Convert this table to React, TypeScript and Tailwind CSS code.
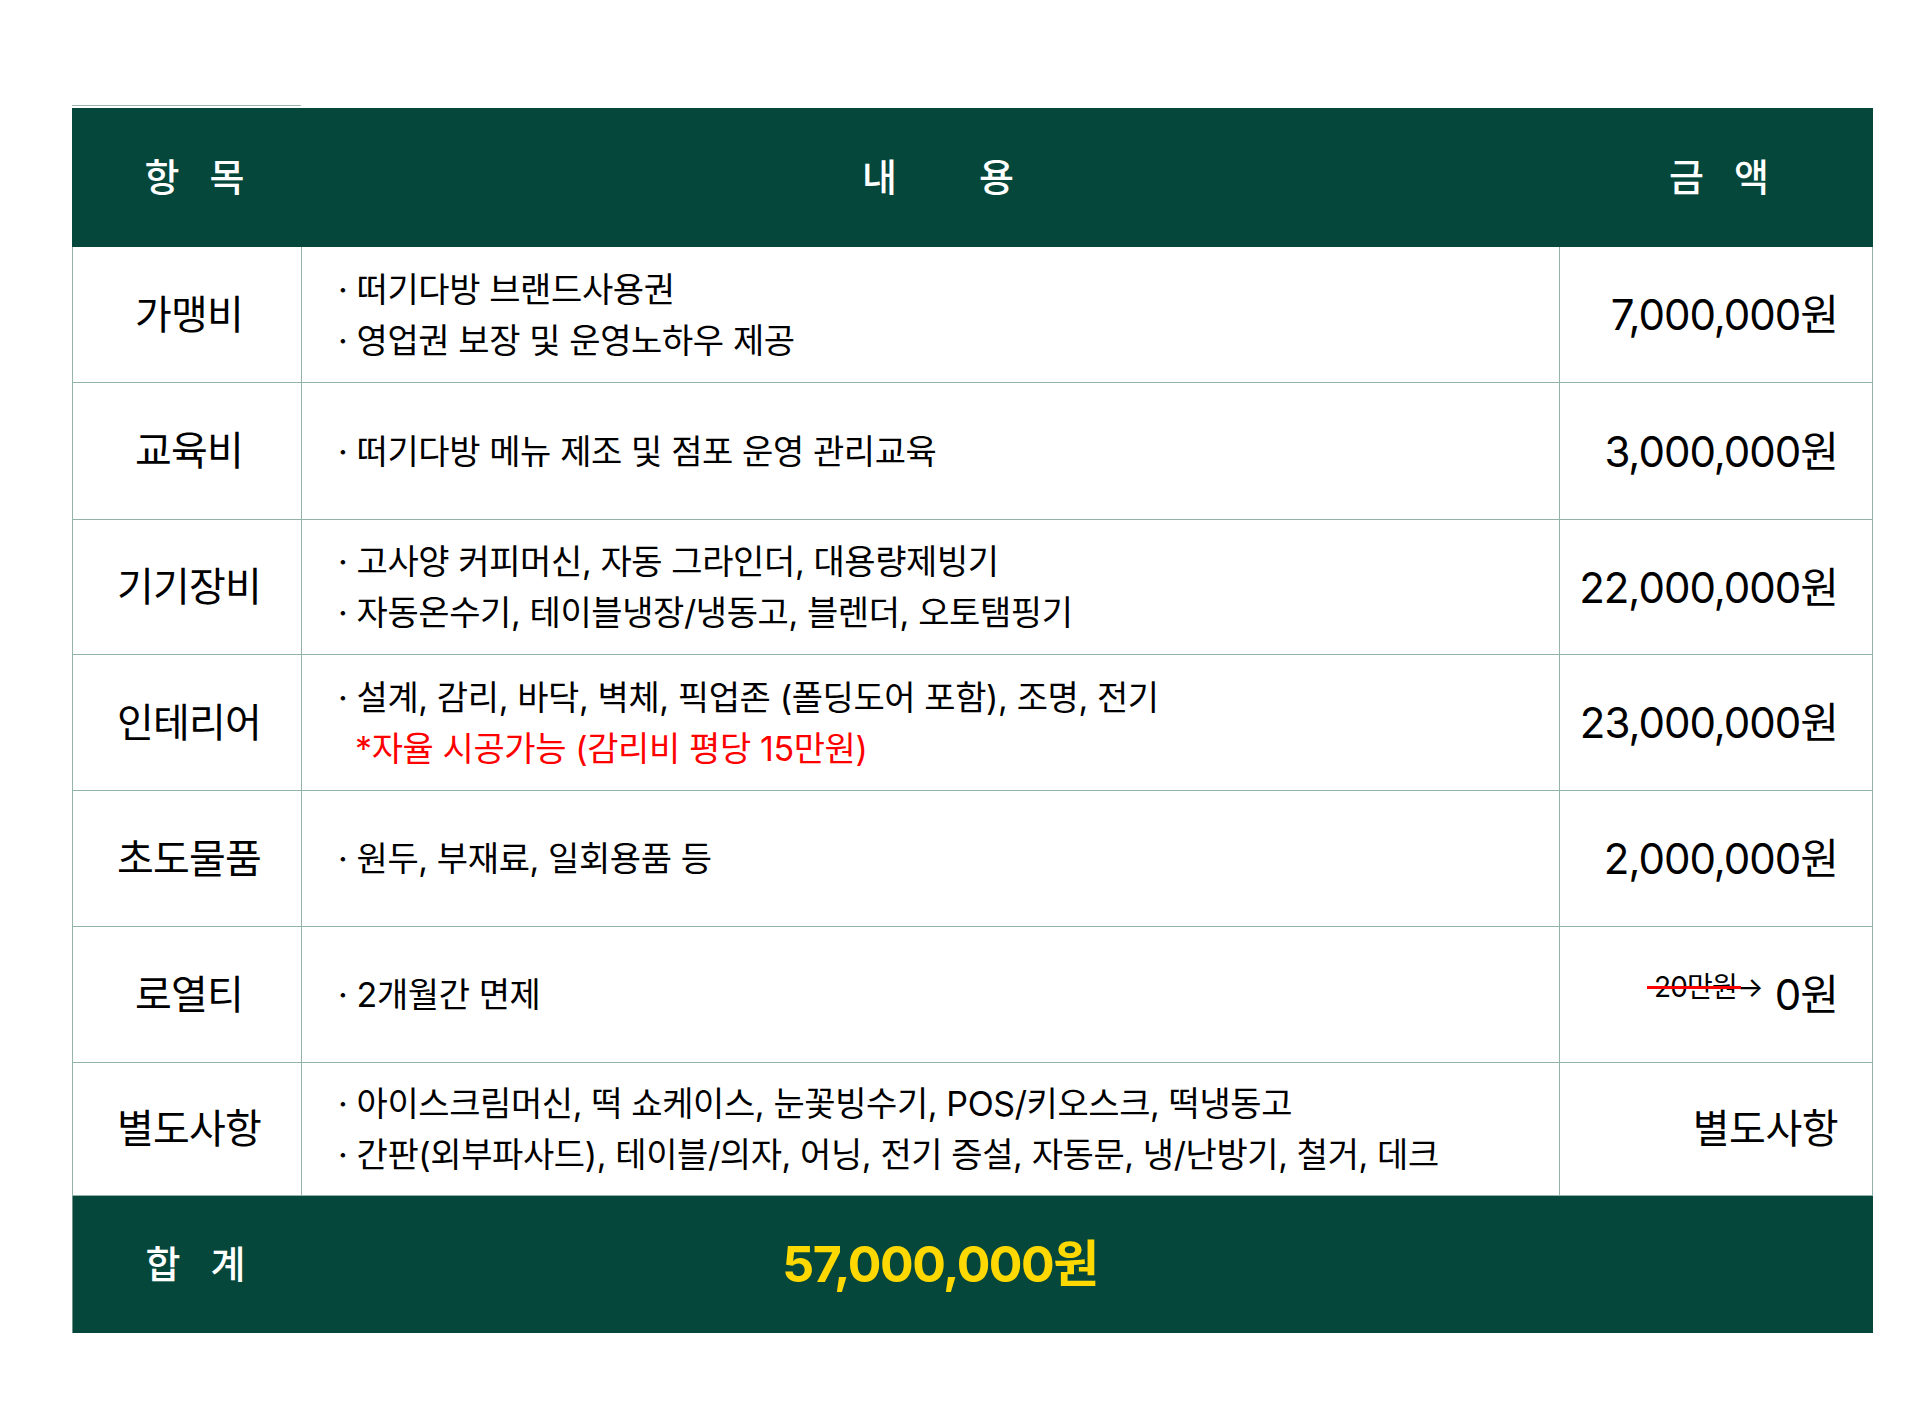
const font = { fontFamily: '"Inter", "Noto Sans CJK KR", sans-serif' };

type Row = {
  name: string;
  lines: { text: string; red?: boolean }[];
  amount: React.ReactNode;
  h: string;
};

const rows: Row[] = [
  {
    name: "가맹비",
    lines: [{ text: "· 떠기다방 브랜드사용권" }, { text: "· 영업권 보장 및 운영노하우 제공" }],
    amount: "7,000,000원",
    h: "h-[136px]",
  },
  {
    name: "교육비",
    lines: [{ text: "· 떠기다방 메뉴 제조 및 점포 운영 관리교육" }],
    amount: "3,000,000원",
    h: "h-[137px]",
  },
  {
    name: "기기장비",
    lines: [
      { text: "· 고사양 커피머신, 자동 그라인더, 대용량제빙기" },
      { text: "· 자동온수기, 테이블냉장/냉동고, 블렌더, 오토탬핑기" },
    ],
    amount: "22,000,000원",
    h: "h-[135px]",
  },
  {
    name: "인테리어",
    lines: [
      { text: "· 설계, 감리, 바닥, 벽체, 픽업존 (폴딩도어 포함), 조명, 전기" },
      { text: "*자율 시공가능 (감리비 평당 15만원)", red: true },
    ],
    amount: "23,000,000원",
    h: "h-[136px]",
  },
  {
    name: "초도물품",
    lines: [{ text: "· 원두, 부재료, 일회용품 등" }],
    amount: "2,000,000원",
    h: "h-[136px]",
  },
  {
    name: "로열티",
    lines: [{ text: "· 2개월간 면제" }],
    amount: (
      <span className="flex items-center">
        <span className="relative -top-[8px] mr-[12px] text-[28px] leading-[28px] tracking-[-0.8px]">
          20만원→
          <span className="absolute left-[-7px] right-[22px] top-[13px] h-[3px] bg-[#ff0000]" />
        </span>
        <span>0원</span>
      </span>
    ),
    h: "h-[136px]",
  },
  {
    name: "별도사항",
    lines: [
      { text: "· 아이스크림머신, 떡 쇼케이스, 눈꽃빙수기, POS/키오스크, 떡냉동고" },
      { text: "· 간판(외부파사드), 테이블/의자, 어닝, 전기 증설, 자동문, 냉/난방기, 철거, 데크" },
    ],
    amount: <span className="text-[40px] tracking-[-0.5px]">별도사항</span>,
    h: "h-[133px]",
  },
];

export default function App() {
  return (
    <div className="min-h-[1423px] bg-white pt-[105px] pl-[72px]" style={font}>
      <div className="w-[1801px]">
        <div className="h-px w-[229px] bg-[#9bb7b0] mb-[2px]" />
        {/* header */}
        <div className="grid grid-cols-[229px_1258px_314px] h-[139px] bg-[#05473a] text-white text-[38px] font-medium">
          <div className="flex items-center justify-center pl-[16px] gap-[30px]">
            <span>항</span>
            <span>목</span>
          </div>
          <div className="flex items-center justify-center gap-[82px] pl-[16px]">
            <span>내</span>
            <span>용</span>
          </div>
          <div className="flex items-center justify-center gap-[30px] pl-[6px]">
            <span>금</span>
            <span>액</span>
          </div>
        </div>

        {rows.map((r) => (
          <div
            key={r.name}
            className={`grid grid-cols-[229px_1258px_314px] ${r.h} border-b border-[#93b2aa] text-black`}
          >
            <div className="flex items-center justify-center border-l border-[#93b2aa] text-[40px] tracking-[-0.8px] pl-[4px]">
              {r.name}
            </div>
            <div className="flex flex-col justify-center border-l border-[#93b2aa] pl-[36px] text-[34px] leading-[51px] tracking-[-0.4px]">
              {r.lines.map((l) => (
                <div key={l.text} className={l.red ? "text-[#ff0000] pl-[17px]" : ""}>
                  {l.text}
                </div>
              ))}
            </div>
            <div className="flex items-center justify-end border-l border-r border-[#93b2aa] pr-[34px] text-[42px] tracking-[-1px]">
              {r.amount}
            </div>
          </div>
        ))}

        {/* total */}
        <div className="grid grid-cols-[229px_1258px_314px] h-[137px] bg-[#05473a] border-l border-[#6f8f87]">
          <div className="flex items-center justify-center pl-[16px] gap-[30px] text-white text-[38px] font-medium">
            <span>합</span>
            <span>계</span>
          </div>
          <div className="flex items-center justify-center pl-[18px] text-[#ffd800] text-[50px] font-bold tracking-[-1.5px]">
            57,000,000원
          </div>
          <div />
        </div>
      </div>
    </div>
  );
}
